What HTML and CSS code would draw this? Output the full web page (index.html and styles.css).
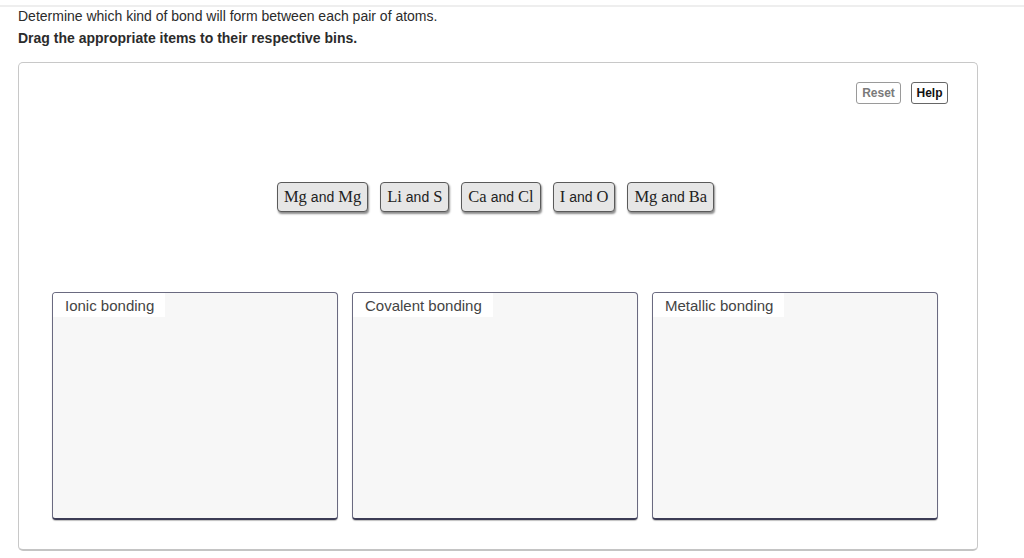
FILE: index.html
```html
<!DOCTYPE html>
<html>
<head>
<meta charset="utf-8">
<link rel="stylesheet" href="styles.css">
</head>
<body>
<div class="topline"></div>
<div class="content">
  <p class="intro">Determine which kind of bond will form between each pair of atoms.</p>
  <p class="instr">Drag the appropriate items to their respective bins.</p>
  <div class="panel">
    <div class="toolbar">
      <button class="btn btn-reset">Reset</button>
      <button class="btn btn-help">Help</button>
    </div>
    <div class="chips">
      <div class="chip"><span class="sym">Mg</span><span class="and">and</span><span class="sym">Mg</span></div>
      <div class="chip"><span class="sym">Li</span><span class="and">and</span><span class="sym">S</span></div>
      <div class="chip"><span class="sym">Ca</span><span class="and">and</span><span class="sym">Cl</span></div>
      <div class="chip"><span class="sym">I</span><span class="and">and</span><span class="sym">O</span></div>
      <div class="chip"><span class="sym">Mg</span><span class="and">and</span><span class="sym">Ba</span></div>
    </div>
    <div class="bins">
      <div class="bin"><div class="bin-label">Ionic bonding</div></div>
      <div class="bin"><div class="bin-label">Covalent bonding</div></div>
      <div class="bin"><div class="bin-label">Metallic bonding</div></div>
    </div>
  </div>
</div>
</body>
</html>
```
FILE: styles.css
```css
html, body {
  margin: 0;
  padding: 0;
  background: #ffffff;
}
body {
  font-family: "Liberation Sans", Arial, sans-serif;
  color: #2b2b2b;
  width: 1024px;
  height: 558px;
  overflow: hidden;
}
.topline {
  height: 2px;
  margin-top: 5px;
  background: #eeeeee;
}
.content {
  padding-left: 18px;
  width: 960px;
}
.intro {
  margin: 1px 0 0 0;
  font-size: 14px;
  line-height: 16px;
}
.instr {
  margin: 6px 0 0 0;
  font-size: 14px;
  line-height: 16px;
  font-weight: bold;
}
.panel {
  margin-top: 16px;
  height: 489px;
  box-sizing: border-box;
  border: 1px solid #c8c8c8;
  border-bottom: 2px solid #c4c4c4;
  border-radius: 5px;
  padding-top: 19px;
}
.toolbar {
  display: flex;
  justify-content: flex-end;
  gap: 10px;
  padding-right: 29px;
  height: 22px;
}
.btn {
  font-family: "Liberation Sans", Arial, sans-serif;
  font-size: 12px;
  font-weight: bold;
  height: 22px;
  padding: 0 4px;
  background: #ffffff;
  border-radius: 3px;
  margin: 0;
  line-height: 18px;
}
.btn-reset {
  color: #7a7a7a;
  border: 1px solid #9a9a9a;
  width: 45px;
}
.btn-help {
  color: #111111;
  border: 1px solid #666666;
  width: 37px;
}
.chips {
  display: flex;
  justify-content: center;
  gap: 12px;
  margin-top: 78px;
  padding-right: 5px;
}
.chip {
  display: flex;
  align-items: baseline;
  height: 30px;
  box-sizing: border-box;
  padding: 5px 6px 0 6px;
  background: #e6e6e6;
  border: 1px solid #5a5a5a;
  border-radius: 4px;
  box-shadow: 1px 2px 2px rgba(0, 0, 0, 0.45);
  color: #222222;
}
.sym {
  font-family: "Liberation Serif", "Times New Roman", serif;
  font-size: 16.5px;
  line-height: 18px;
}
.and {
  font-family: "Liberation Sans", Arial, sans-serif;
  font-size: 14px;
  margin: 0 4px;
}
.bins {
  display: flex;
  gap: 14px;
  margin-top: 80px;
  padding-left: 33px;
}
.bin {
  width: 286px;
  height: 228px;
  box-sizing: border-box;
  background: #f7f7f7;
  border: 1px solid #6a6a80;
  border-bottom: 2px solid #3c3c55;
  border-radius: 4px;
  box-shadow: 0 1px 1px rgba(0, 0, 0, 0.25);
}
.bin-label {
  display: inline-block;
  background: #ffffff;
  font-size: 15px;
  line-height: 25px;
  height: 24px;
  padding: 0 11px 0 12px;
  color: #444444;
  border-top-left-radius: 3px;
}
```
